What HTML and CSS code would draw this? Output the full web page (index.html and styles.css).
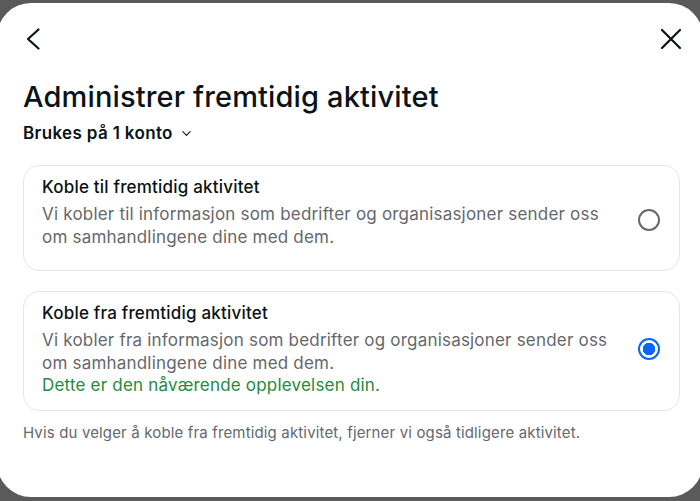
FILE: index.html
```html
<!DOCTYPE html>
<html lang="no">
<head>
<meta charset="utf-8">
<title>Administrer fremtidig aktivitet</title>
<link rel="stylesheet" href="styles.css">
</head>
<body>
<div class="modal">
  <div class="topbar">
    <svg class="icon back" viewBox="0 0 24 24" aria-label="Tilbake"><path d="M15.5 2.5 L5 12 L15.5 21.5" /></svg>
    <svg class="icon close" viewBox="0 0 24 24" aria-label="Lukk"><path d="M3 3 L21 21 M21 3 L3 21" /></svg>
  </div>
  <h1 class="title">Administrer fremtidig aktivitet</h1>
  <div class="account">Brukes på 1 konto <svg class="chev" viewBox="0 0 12 12"><path d="M2 4 L6 8 L10 4" /></svg></div>
  <div class="options">
    <div class="option option-short">
      <div class="opt-text">
        <div class="opt-title">Koble til fremtidig aktivitet</div>
        <div class="opt-desc">Vi kobler til informasjon som bedrifter og organisasjoner sender oss om samhandlingene dine med dem.</div>
      </div>
      <span class="radio"></span>
    </div>
    <div class="option">
      <div class="opt-text">
        <div class="opt-title">Koble fra fremtidig aktivitet</div>
        <div class="opt-desc">Vi kobler fra informasjon som bedrifter og organisasjoner sender oss om samhandlingene dine med dem.</div>
        <div class="opt-current">Dette er den nåværende opplevelsen din.</div>
      </div>
      <span class="radio checked"></span>
    </div>
  </div>
  <p class="note">Hvis du velger å koble fra fremtidig aktivitet, fjerner vi også tidligere aktivitet.</p>
</div>
</body>
</html>
```
FILE: styles.css
```css
html, body {
  margin: 0;
  padding: 0;
  height: 100%;
}
body {
  background: #5a5a5a;
  overflow: hidden;
  font-family: Inter, "Noto Sans", sans-serif;
  color: #1c1e21;
}
.modal {
  margin: 3px -3px 0 -3px;
  height: 494px;
  box-sizing: border-box;
  background: #ffffff;
  border-radius: 34px;
  padding: 0 23px 0 26px;
}
.topbar {
  display: flex;
  justify-content: space-between;
  align-items: center;
  padding-top: 24px;
  height: 24px;
}
.icon {
  width: 24px;
  height: 24px;
  fill: none;
  stroke: #0a1317;
  stroke-width: 2.2;
  stroke-linecap: round;
  stroke-linejoin: round;
}
.close {
  margin-right: -3px;
}
.title {
  margin: 28px 0 0 0;
  font-size: 29px;
  line-height: 35px;
  font-weight: 500;
  letter-spacing: 0.15px;
  color: #0a1317;
}
.account {
  margin-top: 8px;
  font-size: 17px;
  line-height: 22px;
  font-weight: 600;
  letter-spacing: 0.35px;
  display: flex;
  align-items: center;
  gap: 8px;
  color: #0a1317;
}
.chev {
  width: 11px;
  height: 11px;
  fill: none;
  stroke: #1c1e21;
  stroke-width: 1.3;
  stroke-linecap: round;
  stroke-linejoin: round;
}
.options {
  margin-top: 21px;
  display: flex;
  flex-direction: column;
  gap: 20px;
}
.option {
  border: 1px solid #e4e6eb;
  border-radius: 16px;
  padding: 10px 19px 13px 18px;
  display: flex;
  align-items: center;
  gap: 16px;
}
.option-short {
  min-height: 106px;
  box-sizing: border-box;
  align-items: flex-start;
}
.option-short .radio {
  margin-top: 33px;
}
.opt-text {
  flex: 1;
}
.opt-title {
  font-size: 17px;
  line-height: 22px;
  font-weight: 500;
  letter-spacing: 0.2px;
  color: #0a1317;
  margin-bottom: 5px;
}
.opt-desc, .opt-current {
  font-size: 17px;
  line-height: 22.5px;
  letter-spacing: 0.2px;
  color: #65686c;
}
.opt-current {
  color: #248a3b;
}
.radio {
  flex: none;
  width: 22px;
  height: 22px;
  box-sizing: border-box;
  border: 2px solid #65686c;
  border-radius: 50%;
}
.radio.checked {
  border-color: #0866ff;
  background: radial-gradient(circle, #0866ff 0 6px, #ffffff 6.5px);
}
.note {
  margin: 13px 0 0 0;
  font-size: 15px;
  line-height: 18px;
  letter-spacing: 0.15px;
  color: #65686c;
}
```
